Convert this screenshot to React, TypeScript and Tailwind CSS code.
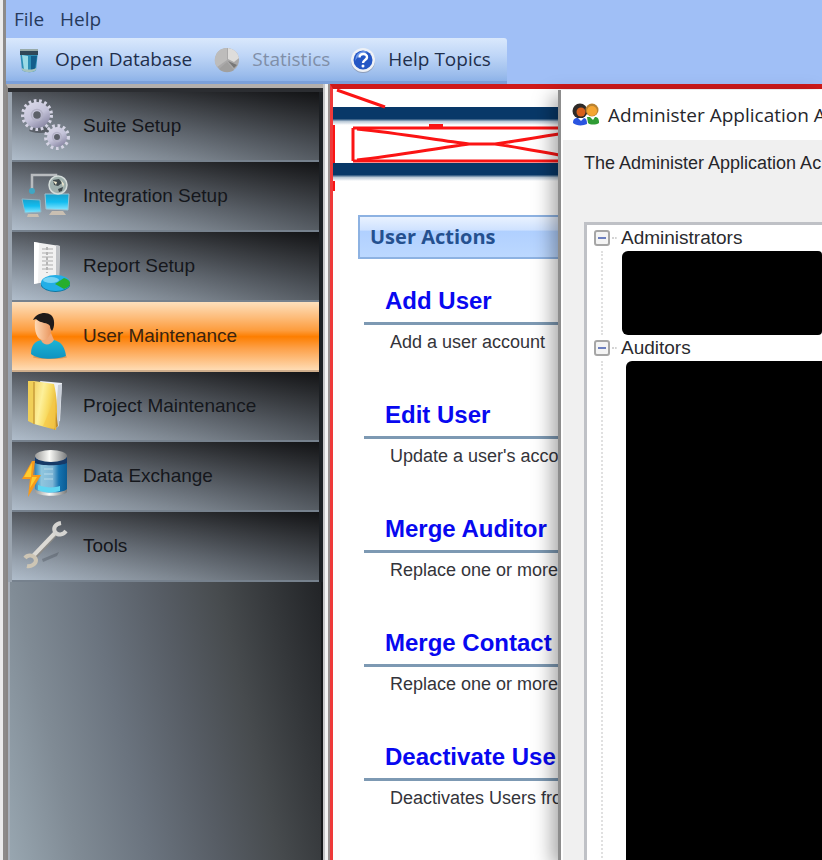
import type { ReactNode } from "react";

const segoe = "font-['Open_Sans','Noto_Sans',sans-serif]";
const arial = "font-['Liberation_Sans',Arial,sans-serif]";

function Cog({ cx, cy, r }: { cx: number; cy: number; r: number }) {
  return (
    <g>
      <circle cx={cx} cy={cy} r={r} fill="none" stroke="#d5d4e4" strokeWidth="4" strokeDasharray="2.6 2.6" />
      <circle cx={cx} cy={cy} r={r - 1} fill="url(#cog)" />
      <circle cx={cx} cy={cy} r={r * 0.4} fill="none" stroke="#b3b2c6" strokeWidth="1.5" />
      <circle cx={cx} cy={cy} r={r * 0.27} fill="#5c6068" />
    </g>
  );
}

function SuiteIcon() {
  return (
    <svg width="52" height="60" viewBox="0 0 52 60" aria-hidden="true">
      <defs>
        <linearGradient id="cog" x1="0" y1="0" x2="0.6" y2="1">
          <stop offset="0" stopColor="#dddceb" />
          <stop offset="0.6" stopColor="#c3c2d8" />
          <stop offset="1" stopColor="#8e8ca8" />
        </linearGradient>
      </defs>
      <ellipse cx="20" cy="34" rx="11" ry="3" fill="#2d3036" opacity="0.5" />
      <Cog cx={17} cy={19} r={14} />
      <Cog cx={37} cy={41} r={11} />
    </svg>
  );
}

function IntegrationIcon() {
  return (
    <svg width="52" height="60" viewBox="0 0 52 60" aria-hidden="true">
      <defs>
        <linearGradient id="screen" x1="0" y1="0" x2="0" y2="1">
          <stop offset="0" stopColor="#1a9fc9" />
          <stop offset="0.5" stopColor="#12bdf0" />
          <stop offset="1" stopColor="#8be6ff" />
        </linearGradient>
      </defs>
      <path d="M12 24V9h24v8" fill="none" stroke="#b9bcbf" strokeWidth="2.5" />
      <circle cx="12" cy="25" r="3" fill="#3fa6c4" />
      <path d="M2 33l18 1 1 12-16 1z" fill="url(#screen)" stroke="#8fb6c6" strokeWidth="1" />
      <path d="M8 48h10l1 3H7z" fill="#c9bfb2" />
      <path d="M25 28h24l-1 16-22-1z" fill="url(#screen)" stroke="#9dc4d2" strokeWidth="1" />
      <path d="M32 45h11l3 4H29z" fill="#c9bfb2" />
      <circle cx="38" cy="19" r="9" fill="#9fb0ad" stroke="#d4dcda" strokeWidth="1.5" />
      <path d="M33 14l6-1 3 4-4 3-4-1zM38 23l5-2-1 4-3 1z" fill="#3f4a4d" />
      <path d="M33 15l4 1-1 3zM41 14l3 4-1 3z" fill="#f1ead0" />
    </svg>
  );
}

function ReportIcon() {
  return (
    <svg width="52" height="60" viewBox="0 0 52 60" aria-hidden="true">
      <path d="M14 6l26 4-1 35-14 1-11 2z" fill="#f1f1f1" />
      <path d="M36 9l4 1-1 34-3 1z" fill="#bfc2c6" />
      <path d="M14 6l5 1-1 40-4 1z" fill="#ffffff" />
      <path d="M22 13h11M22 17h11M22 21h11M22 25h11M22 29h11M22 33h11" stroke="#c4c4c4" strokeWidth="1.5" />
      <path d="M27 11v26" stroke="#b5b5b5" strokeWidth="2" strokeDasharray="3 2" />
      <path d="M21 47v3a15 8 0 0 0 29 0v-3z" fill="#0b76a3" />
      <ellipse cx="35.5" cy="47" rx="14.5" ry="8" fill="#23aee6" />
      <ellipse cx="31" cy="44" rx="8" ry="3" fill="#9be2fa" opacity="0.7" />
      <path d="M35 48l9-6c4 1 6 3 6 5 0 3-3 5-6 6z" fill="#27ae2d" />
    </svg>
  );
}

function UserIcon() {
  return (
    <svg width="52" height="60" viewBox="0 0 52 60" aria-hidden="true">
      <defs>
        <linearGradient id="shirt" x1="0" y1="0" x2="0" y2="1">
          <stop offset="0" stopColor="#1cb4d6" />
          <stop offset="1" stopColor="#0f93c0" />
        </linearGradient>
        <linearGradient id="skin" x1="0" y1="0" x2="1" y2="0">
          <stop offset="0" stopColor="#ffd9b4" />
          <stop offset="1" stopColor="#e8925a" />
        </linearGradient>
      </defs>
      <ellipse cx="30" cy="51" rx="17" ry="2" fill="#b0682b" opacity="0.4" />
      <path d="M11 48c0-9 4-13 11-14h12c8 2 11 8 12 16-9 4-27 4-35-2z" fill="url(#shirt)" />
      <path d="M20 32l11-5 3 7c-3 5-9 6-12 2z" fill="#f0a878" />
      <path d="M15 15c4-4 14-4 17 1 1 8-3 19-9 18-6 0-9-9-8-19z" fill="url(#skin)" />
      <path d="M13 14c3-7 13-9 18-5 4 3 4 12 1 16-1-1-2-3-2-5-2-4-9-2-14-7-1 0-2 1-3 1z" fill="#1f1b1a" />
    </svg>
  );
}

function ProjectIcon() {
  return (
    <svg width="52" height="60" viewBox="0 0 52 60" aria-hidden="true">
      <defs>
        <linearGradient id="folder" x1="0" y1="0" x2="1" y2="0.4">
          <stop offset="0" stopColor="#f3d265" />
          <stop offset="0.4" stopColor="#fdf09a" />
          <stop offset="0.7" stopColor="#f8db62" />
          <stop offset="1" stopColor="#e8b83a" />
        </linearGradient>
      </defs>
      <path d="M20 5l22 2-2 38-6 2z" fill="#eef1f6" />
      <path d="M38 9l4-1-3 42-4 3z" fill="#c9cfd8" />
      <path d="M14 5l20 3c3 12 4 28 2 46L14 48z" fill="url(#folder)" />
      <path d="M36 36l2 14-4 4z" fill="#c18d28" />
      <path d="M8 5h6v43l-6-3z" fill="#f0cf58" />
      <path d="M14 6v42" stroke="#c99d3a" strokeWidth="1.5" />
      <path d="M35 22l1 31-13-3z" fill="#f6c948" opacity="0.7" />
    </svg>
  );
}

function ExchangeIcon() {
  return (
    <svg width="52" height="60" viewBox="0 0 52 60" aria-hidden="true">
      <defs>
        <linearGradient id="drum" x1="0" y1="0" x2="1" y2="0">
          <stop offset="0" stopColor="#2f86ba" />
          <stop offset="0.2" stopColor="#8fc6de" />
          <stop offset="0.55" stopColor="#7fb6d6" />
          <stop offset="0.75" stopColor="#1573b0" />
          <stop offset="1" stopColor="#0a5b94" />
        </linearGradient>
        <linearGradient id="steel" x1="0" y1="0" x2="1" y2="0">
          <stop offset="0" stopColor="#9b9b99" />
          <stop offset="0.45" stopColor="#fbfbf8" />
          <stop offset="1" stopColor="#77797a" />
        </linearGradient>
      </defs>
      <path d="M15 41v5c4 5 28 5 32 0v-5z" fill="url(#steel)" />
      <path d="M15 11h32v32c-5 5-27 5-32 0z" fill="url(#drum)" />
      <path d="M18 39c7 3 17 3 22 1v5c-7 2-16 2-22-1z" fill="#5fd6f2" />
      <path d="M15 11h32v6c-5 3-27 3-32 0z" fill="#173a68" />
      <path d="M24 23h9M24 28h9M24 33h9" stroke="#c4e3f0" strokeWidth="2" opacity="0.4" />
      <ellipse cx="31" cy="10" rx="16" ry="6" fill="url(#steel)" />
      <path d="M12 15L2 33h8L8 51l13-22h-8l2-14z" fill="#f79a1b" />
      <path d="M12 17L4 31h8l-2 11 7-11h-6z" fill="#ffcd2f" />
    </svg>
  );
}

function ToolsIcon() {
  return (
    <svg width="52" height="60" viewBox="0 0 52 60" aria-hidden="true">
      <path d="M22 43l17-7-2 4-14 6z" fill="#4c535c" opacity="0.4" />
      <path d="M14 41L36 17" stroke="#8b8a87" strokeWidth="5" />
      <path d="M13 40L35 17" stroke="#dcdad5" strokeWidth="4" />
      <path d="M41 7c-6 1-8 5-6 9 3 4 8 3 11-1" fill="none" stroke="#d5d4d1" strokeWidth="4" />
      <path d="M5 42c3-4 10-3 11 2 0 4-5 7-9 6" fill="none" stroke="#cdc5b4" strokeWidth="4" />
    </svg>
  );
}

function DatabaseIcon() {
  return (
    <svg width="20" height="26" viewBox="0 0 20 26" aria-hidden="true">
      <path d="M1 4l2 19c3 3 12 3 14 0l2-19z" fill="#2c8fb6" />
      <path d="M3 8l2 15 4 2V9z" fill="#9adbe6" />
      <path d="M12 9h6l-2 13-4 2z" fill="#125e8c" />
      <path d="M3 21c3 2 11 2 14 0v2c-3 3-11 3-14 0z" fill="#a6c2bd" />
      <path d="M1 3h18v5H1z" fill="#304858" />
      <path d="M1 2h18v2H1z" fill="#98aaa8" />
    </svg>
  );
}

function PieIcon() {
  return (
    <svg width="26" height="26" viewBox="0 0 26 26" aria-hidden="true">
      <circle cx="13" cy="13" r="12" fill="#aaa9a9" />
      <path d="M13 13V1A12 12 0 0 0 3 20z" fill="#bdbcbb" />
      <path d="M14 12V1a12 12 0 0 1 11 10l-5 4z" fill="#dedddb" />
      <path d="M14 14l9 4-3 3z" fill="#777" />
      <path d="M5 22l8-7 7 8c-4 3-11 3-15-1z" fill="#a09f9e" />
    </svg>
  );
}

function HelpIcon() {
  return (
    <svg width="26" height="26" viewBox="0 0 26 26" aria-hidden="true">
      <circle cx="13" cy="14" r="12" fill="#8c9cb8" />
      <circle cx="13" cy="13" r="12" fill="#eef1f6" />
      <circle cx="13" cy="13" r="9.5" fill="#2456c4" />
      <path d="M6 9a9 9 0 0 1 12-4C12 6 8 9 5 14z" fill="#6c98ea" />
      <path d="M9.500 10.500c0-5 8-4.500 7.500 0-.3 2.500-4 2.500-4 5.500" fill="none" stroke="#fff" strokeWidth="2.400" />
      <circle cx="13" cy="19" r="1.500" fill="#fff" />
    </svg>
  );
}

function PeopleIcon() {
  return (
    <svg className="shrink-0" width="28" height="24" viewBox="0 0 28 24" aria-hidden="true">
      <circle cx="8" cy="8" r="7.500" fill="#2e2a27" />
      <circle cx="9" cy="9" r="4.500" fill="#d8601c" />
      <path d="M1 20c0-5 3-5 5-5h6c2 0 3 2 3 6-4 2-11 2-14-1z" fill="#2a55e0" />
      <path d="M6 15l3 3 3-3z" fill="#fff" />
      <circle cx="20" cy="7" r="6.500" fill="#b98231" />
      <circle cx="20" cy="8" r="5" fill="#f5a531" />
      <path d="M15 14h9c3 1 3 4 3 6-3 2-9 2-11 0z" fill="#2f9c34" />
      <path d="M18 14l3 3 2-3z" fill="#fff" />
    </svg>
  );
}

const navItems: { label: string; icon: ReactNode; active?: boolean }[] = [
  { label: "Suite Setup", icon: <SuiteIcon /> },
  { label: "Integration Setup", icon: <IntegrationIcon /> },
  { label: "Report Setup", icon: <ReportIcon /> },
  { label: "User Maintenance", icon: <UserIcon />, active: true },
  { label: "Project Maintenance", icon: <ProjectIcon /> },
  { label: "Data Exchange", icon: <ExchangeIcon /> },
  { label: "Tools", icon: <ToolsIcon /> },
];

const actions = [
  { title: "Add User", text: "Add a user account" },
  { title: "Edit User", text: "Update a user's acco" },
  { title: "Merge Auditor", text: "Replace one or more" },
  { title: "Merge Contact", text: "Replace one or more" },
  { title: "Deactivate Use", text: "Deactivates Users fro" },
];

function Sidebar() {
  return (
    <aside className="flex w-[317px] shrink-0 flex-col border-t-[4px] border-l-[2px] border-t-[#b3afac] border-l-[#8a8785] bg-[#16181a]">
      <div className="h-[4px] bg-[#2b2d31]" />
      <nav className="border-r-[4px] border-l-[4px] border-r-[#1c1f23] border-l-[#9aa4af]">
        {navItems.map((item) => (
          <button
            key={item.label}
            type="button"
            className={`flex h-[70px] w-full items-center gap-[11px] border-b-[2px] pl-2 text-left text-[19px] ${arial} ${
              item.active
                ? "border-b-[#cfae8c] bg-[linear-gradient(to_bottom,#fde0bd_0%,#fdbd7c_22%,#fd9c3c_42%,#fd7e00_51%,#fda048_68%,#fedcb4_100%)] text-[#3a2410]"
                : "border-b-[#76818d] bg-[linear-gradient(to_right,rgba(0,0,0,0),rgba(0,0,0,0.2)_60%,rgba(0,0,0,0.36)),linear-gradient(6deg,#b0bdcb_0%,#98a3af_20%,#747c86_45%,#4b4f55_72%,#1d1e21_100%)] text-[#15171c]"
            }`}
          >
            {item.icon}
            <span>{item.label}</span>
          </button>
        ))}
      </nav>
      <div className="flex-1 border-r-[2px] border-l-[2px] border-r-[#17191b] border-l-[#a9b1ba] bg-[linear-gradient(77deg,#98a6b0_0%,#808b95_18%,#6a737e_38%,#575d65_56%,#474b4e_72%,#222427_100%)]" />
    </aside>
  );
}

function Banner() {
  return (
    <div className="relative">
      <div className="h-[18px]" />
      <div className="h-[18px] bg-[linear-gradient(to_bottom,#083868_0%,#083868_65%,#b9c8d6_80%,#ffffff_100%)]" />
      <div className="h-[38px]" />
      <div className="h-[18px] bg-[linear-gradient(to_bottom,#083868_0%,#083868_65%,#b9c8d6_80%,#ffffff_100%)]" />
      <svg className="absolute top-0 left-0" width="300" height="102" viewBox="0 0 300 102" aria-hidden="true">
        <g fill="none" stroke="#fb1414" strokeWidth="3">
          <path d="M4 1l48 17" />
          <path d="M20 39h280M20 72h280M20 39v33" />
          <path d="M24 40c40 4 80 11 112 15h26c30-4 60-10 90-14M24 71c40-4 80-12 112-16h26c30 4 60 11 90 15" />
          <path d="M96 37h14" strokeWidth="4" />
          <path d="M0 36v38M0 92v10" strokeWidth="4" />
        </g>
      </svg>
    </div>
  );
}

function Expander({ label, children }: { label: string; children: ReactNode }) {
  return (
    <li className="flex flex-col">
      <div className="flex h-[26px] items-center">
        <button
          type="button"
          aria-label={`Collapse ${label}`}
          className="flex h-4 w-4 items-center justify-center rounded-[3px] border-2 border-[#a6a6a6] bg-[#f4f4f4]"
        >
          <span className="h-[2px] w-2 bg-[#6c7fc0]" />
        </button>
        <span className="mr-1 ml-[2px] w-[5px] border-t-2 border-dotted border-[#d4d4d4]" />
        <span className={`text-[19px] text-[#2a2a2e] ${arial}`}>{label}</span>
      </div>
      {children}
    </li>
  );
}

function AccountsDialog() {
  return (
    <section
      role="dialog"
      aria-label="Administer Application"
      className="absolute top-[6px] right-0 bottom-0 left-[552px] flex flex-col border-l-[3px] border-[#8d8d8d] bg-[#f0f0f0] shadow-[-6px_6px_18px_rgba(0,0,0,0.35)]"
    >
      <div className="flex h-[50px] shrink-0 items-center gap-2 overflow-hidden bg-white pl-[11px]">
        <PeopleIcon />
        <h1 className={`text-[19px] whitespace-nowrap text-[#26262c] ${segoe}`}>Administer Application A</h1>
      </div>
      <div className="flex min-h-0 flex-1 flex-col overflow-hidden border-l-2 border-white pl-[21px]">
        <p className={`h-[82px] shrink-0 pt-3 text-[18px] leading-[22px] whitespace-nowrap text-[#26262a] ${arial}`}>
          The Administer Application Ac
        </p>
        <ul className="min-h-0 flex-1 overflow-hidden border-t-[3px] border-l-[3px] border-[#bfc1c6] bg-white pl-[7px]">
          <Expander label="Administrators">
            <div className="ml-[7px] border-l-2 border-dotted border-[#e0e0e0] pl-[19px]">
              <div className="h-[84px] rounded-l-md rounded-r-sm bg-black" />
            </div>
          </Expander>
          <Expander label="Auditors">
            <div className="ml-[7px] border-l-2 border-dotted border-[#e0e0e0] pl-[23px]">
              <div className="h-screen rounded-tl-md bg-black" />
            </div>
          </Expander>
        </ul>
      </div>
    </section>
  );
}

export default function App() {
  return (
    <div className="flex h-screen overflow-hidden bg-[#a0bff6]">
      <div className="w-[6px] shrink-0 border-r-[3px] border-[#8d8b8a] bg-[#ececec]" />
      <div className="flex min-w-0 flex-1 flex-col">
        <header className={segoe}>
          <nav className="flex h-[38px] items-center gap-4 pl-2 text-[19px] text-[#263a5c]">
            <button type="button">File</button>
            <button type="button">Help</button>
          </nav>
          <div className="flex">
            <div className="flex h-[46px] items-center rounded-tr-[3px] border-b-[3px] border-[#7ba0da] bg-[linear-gradient(to_bottom,#d9e8fc_0%,#bfd6f7_40%,#9cbdec_85%,#8db2e8_100%)] pr-4 pl-[13px] text-[19px] whitespace-nowrap text-[#1f2f4c]">
              <button type="button" className="flex items-center gap-4">
                <DatabaseIcon />
                Open Database
              </button>
              <button type="button" disabled className="ml-[22px] flex items-center gap-3 text-[#808fa8]">
                <PieIcon />
                Statistics
              </button>
              <button type="button" className="ml-5 flex items-center gap-3">
                <HelpIcon />
                Help Topics
              </button>
            </div>
          </div>
        </header>
        <div className="relative flex min-h-0 flex-1">
          <Sidebar />
          <div className="w-[7px] shrink-0 border-r-2 border-l-2 border-r-[#98908f] border-l-[#c5c5c7] bg-[#f3f3f3]" />
          <main className="min-w-0 flex-1 overflow-hidden border-t-[5px] border-l-[3px] border-t-[#ce1a1a] border-l-[#ee3a3a] bg-white">
            <Banner />
            <div className="pt-[34px] pl-[25px]">
              <h2
                className={`flex h-[44px] items-center border-2 border-[#8db2e2] bg-[linear-gradient(to_bottom,#e9f2ff_0%,#cfe2ff_32%,#b0d0ff_36%,#bcd8ff_100%)] pl-[10px] text-[20px] font-bold text-[#24508f] ${segoe}`}
              >
                User Actions
              </h2>
              <ul className={`pt-5 pl-[6px] ${arial}`}>
                {actions.map((action) => (
                  <li key={action.title} className="h-[114px] whitespace-nowrap">
                    <a
                      href="#"
                      className="block border-b-[3px] border-[#7d99b3] pl-[21px] text-[24px] leading-[43px] font-bold text-[#0808f0]"
                    >
                      {action.title}
                    </a>
                    <p className="pl-[26px] text-[18px] leading-[34px] text-[#34343a]">{action.text}</p>
                  </li>
                ))}
              </ul>
            </div>
          </main>
          <AccountsDialog />
        </div>
      </div>
    </div>
  );
}
